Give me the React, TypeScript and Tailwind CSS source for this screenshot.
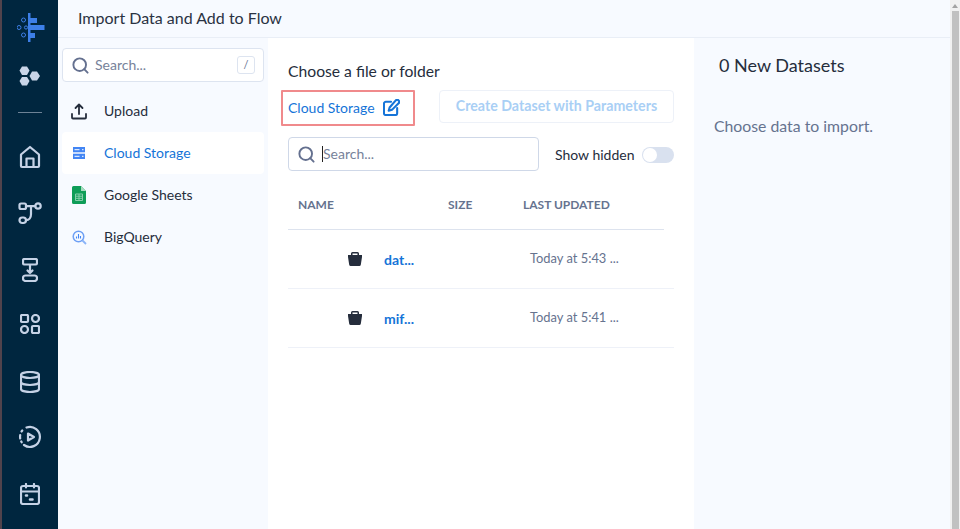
import React from 'react';
import { Search } from 'lucide-react';

const lato = { fontFamily: 'Lato, "Open Sans", sans-serif' };

const Logo = () => (
  <svg width="28" height="30" viewBox="0 0 28 30" fill="none">
    <rect x="11" y="0" width="2.5" height="29" fill="#3d7fe8" />
    <rect x="13" y="5" width="7" height="5" fill="#3d7fe8" />
    <rect x="13" y="12" width="14.5" height="5" fill="#3d7fe8" />
    <rect x="13" y="20" width="5" height="5" fill="#3d7fe8" />
    <circle cx="6.5" cy="7" r="2" stroke="#3d7fe8" strokeWidth="1" />
    <circle cx="2" cy="14.5" r="2" stroke="#3d7fe8" strokeWidth="1" />
    <circle cx="9" cy="14.5" r="1.6" stroke="#3d7fe8" strokeWidth="1" />
    <circle cx="6.5" cy="22" r="2" stroke="#3d7fe8" strokeWidth="1" />
  </svg>
);

const Hexes = () => (
  <svg width="22" height="20" viewBox="0 0 22 20" fill="#c9d5e8">
    <polygon points="3,0.5 8,0.5 10.5,4.5 8,9 3,9 0.5,4.5" />
    <polygon points="13,5.5 18,5.5 21,10 18,14.5 13,14.5 10.5,10" />
    <polygon points="3,11 8,11 10.5,15 8,19.5 3,19.5 0.5,15" />
  </svg>
);

const stroke = { fill: 'none', stroke: '#c5d2e6', strokeWidth: 2.2, strokeLinecap: 'round', strokeLinejoin: 'round' } as const;

const Home = () => (
  <svg width="22" height="24" viewBox="0 0 22 24" {...stroke}>
    <path d="M2 21V9.500L11 2l9 7.500V21a1 1 0 0 1-1 1H3a1 1 0 0 1-1-1z" />
    <path d="M7.500 22v-8.500h7V22" />
  </svg>
);

const FlowIcon = () => (
  <svg width="24" height="24" viewBox="0 0 24 24" {...stroke}>
    <rect x="1.500" y="2.500" width="6.500" height="5.500" rx="1.500" />
    <rect x="1.500" y="16.500" width="6.500" height="5.500" rx="2.700" />
    <circle cx="20" cy="5" r="2.700" />
    <path d="M8 5.200h9.300M13 5.200v8c0 3.500-2 6-5 6" />
  </svg>
);

const ImportIcon = () => (
  <svg width="16" height="24" viewBox="0 0 16 24" {...stroke}>
    <rect x="1" y="1" width="14" height="5.500" rx="1.500" />
    <rect x="1" y="17.500" width="14" height="5.500" rx="2.500" />
    <path d="M8 7v8M5.500 12.500 8 15l2.500-2.500" />
  </svg>
);

const GridIcon = () => (
  <svg width="20" height="20" viewBox="0 0 20 20" {...stroke}>
    <rect x="1" y="1" width="7" height="7" rx="1" />
    <circle cx="15.500" cy="4.500" r="3.500" />
    <circle cx="4.500" cy="15.500" r="3.500" />
    <rect x="12" y="12" width="7" height="7" rx="1" />
  </svg>
);

const DbIcon = () => (
  <svg width="20" height="22" viewBox="0 0 20 22" {...stroke}>
    <ellipse cx="10" cy="4" rx="9" ry="3" />
    <path d="M1 4v14c0 1.700 4 3 9 3s9-1.300 9-3V4" />
    <path d="M1 11c0 1.700 4 3 9 3s9-1.300 9-3" />
  </svg>
);

const PlayIcon = () => (
  <svg width="24" height="24" viewBox="0 0 24 24" {...stroke}>
    <path d="M8.500 2.500A10 10 0 1 1 6 20" />
    <path d="M2.200 13.500a10 10 0 0 1 0-3.500M3.700 17.300l-.5-.9M3.500 6.500l.8-1" />
    <path d="M10 8.500 16 12l-6 3.500z" />
  </svg>
);

const CalendarIcon = () => (
  <svg width="20" height="22" viewBox="0 0 20 22" {...stroke}>
    <rect x="1" y="3" width="18" height="18" rx="2" />
    <path d="M1 8.500h18M6 1v3.500M14 1v3.500" />
    <path d="M6 12.500h1M10 16.500h2.500" strokeWidth="2.600" />
  </svg>
);

const UploadIcon = () => (
  <svg width="16" height="17" viewBox="0 0 16 17" fill="none" stroke="#252d3c" strokeWidth="1.800" strokeLinecap="round" strokeLinejoin="round">
    <path d="M8 11V1.500M4.500 5 8 1.500 11.500 5" />
    <path d="M1 11v3.500a1 1 0 0 0 1 1h12a1 1 0 0 0 1-1V11" />
  </svg>
);

const StorageIcon = () => (
  <svg width="12" height="12" viewBox="0 0 12 12">
    <rect width="12" height="5.300" fill="#4285f4" />
    <rect y="6.700" width="12" height="5.300" fill="#4285f4" />
    <path d="M1.500 2.700h5M9 2.700h1.500M1.500 9.300h5M9 9.300h1.500" stroke="#fff" strokeWidth="1" />
  </svg>
);

const SheetsIcon = () => (
  <svg width="14" height="18" viewBox="0 0 14 18">
    <path d="M1.500 0H9l5 5v11.500a1.500 1.500 0 0 1-1.500 1.500h-11A1.500 1.500 0 0 1 0 16.500v-15A1.500 1.500 0 0 1 1.500 0z" fill="#0f9d58" />
    <path d="M9 0l5 5H9z" fill="#a8dcc0" />
    <path d="M3.500 8h7v6.500h-7zM3.500 10.200h7M3.500 12.300h7M7 8v6.500" fill="none" stroke="#87ceab" strokeWidth="1" />
  </svg>
);

const BigQueryIcon = () => (
  <svg width="15" height="15" viewBox="0 0 15 15" fill="none">
    <circle cx="6.500" cy="6.500" r="5.300" stroke="#6ea0f5" strokeWidth="1.500" />
    <path d="M6.500 4v4.500M4.500 6.500v2M8.500 6v2.500" stroke="#4285f4" strokeWidth="1.100" />
    <path d="M10.500 10.500l3.500 3.500" stroke="#8ab4f8" strokeWidth="1.800" />
  </svg>
);

const EditIcon = () => (
  <svg width="17" height="17" viewBox="0 0 18 18" fill="none" stroke="#1574d8" strokeWidth="2.200" strokeLinecap="round" strokeLinejoin="round">
    <path d="M8.500 3H3a2 2 0 0 0-2 2v10a2 2 0 0 0 2 2h10a2 2 0 0 0 2-2V9.500" />
    <path d="M13.500 1.500a1.800 1.800 0 0 1 3 3L9.500 11.500l-3.500 1 1-3.500z" />
  </svg>
);

const Bucket = () => (
  <svg width="14" height="14" viewBox="0 0 14 14">
    <path fillRule="evenodd" d="M4.500 0h5A1.500 1.500 0 0 1 11 1.500V3h3v2l-1.200 7.800A1.500 1.500 0 0 1 11.300 14H2.700a1.500 1.500 0 0 1-1.500-1.200L0 5V3h3V1.500A1.500 1.500 0 0 1 4.500 0zM4.500 1.500V3h5V1.500z" fill="#252d3c" />
  </svg>
);

const navIcons = [
  { node: <Home />, h: 'h-[24px]', mt: 'mt-[32px]' },
  { node: <FlowIcon />, h: 'h-[24px]', mt: 'mt-[32px]' },
  { node: <ImportIcon />, h: 'h-[24px]', mt: 'mt-[33px]' },
  { node: <GridIcon />, h: 'h-[20px]', mt: 'mt-[32px]' },
  { node: <DbIcon />, h: 'h-[22px]', mt: 'mt-[37px]' },
  { node: <PlayIcon />, h: 'h-[24px]', mt: 'mt-[32px]' },
  { node: <CalendarIcon />, h: 'h-[22px]', mt: 'mt-[34px]' },
];

const sources = [
  { label: 'Upload', icon: <UploadIcon /> },
  { label: 'Cloud Storage', icon: <StorageIcon />, active: true },
  { label: 'Google Sheets', icon: <SheetsIcon /> },
  { label: 'BigQuery', icon: <BigQueryIcon /> },
];

const files = [
  { name: 'dat...', updated: 'Today at 5:43 ...' },
  { name: 'mif...', updated: 'Today at 5:41 ...' },
];

export default function App() {
  return (
    <div style={lato} className="flex h-[529px] w-[960px] overflow-hidden bg-white text-[14px] text-[#252d3c]">
      <div className="w-[2px] shrink-0 bg-[#51434c]" />

      {/* main nav */}
      <nav className="flex w-[56px] shrink-0 flex-col items-center bg-[#00263f] pt-[13px]">
        <div className="ml-[1px] h-[30px]"><Logo /></div>
        <div className="mt-[23px] h-[20px]"><Hexes /></div>
        <div className="mt-[26px] h-px w-[24px] bg-[#6d8296]" />
        {navIcons.map((item, i) => (
          <div key={i} className={`${item.mt} ${item.h} flex items-center justify-center`}>{item.node}</div>
        ))}
      </nav>

      <div className="flex min-w-0 flex-1 flex-col">
        <header className="flex h-[38px] shrink-0 items-center border-b border-[#e9eef6] bg-[#f7faff] pb-[2px] pl-[20px] text-[16px] leading-none text-[#2a3242]">
          Import Data and Add to Flow
        </header>

        <div className="flex min-h-0 flex-1">
          {/* sources */}
          <aside className="w-[210px] shrink-0 bg-[#f7faff] px-[4px] pt-[10px]">
            <div className="flex h-[34px] items-center rounded-[4px] border border-[#dde4f0] bg-white pl-[8px] pr-[8px]">
              <Search size={19} strokeWidth={2.4} className="text-[#64708f]" />
              <span className="ml-[5px] flex-1 pb-[2px] text-[14px] text-[#77829a]">Search...</span>
              <span className="flex h-[18px] w-[18px] items-center justify-center rounded-[3px] border border-[#dde4f0] text-[11px] text-[#64708f]">/</span>
            </div>
            <div className="mt-[8px]">
              {sources.map(s => (
                <div key={s.label} className={`flex h-[42px] items-center rounded-[4px] ${s.active ? 'bg-white text-[#1574d8]' : ''}`}>
                  <span className="flex w-[34px] justify-center">{s.icon}</span>
                  <span className="ml-[8px] pb-[2px]">{s.label}</span>
                </div>
              ))}
            </div>
          </aside>

          {/* browser */}
          <main className="w-[426px] shrink-0 bg-white pl-[20px] pr-[20px]">
            <div className="mt-[23px] text-[15.7px] leading-[20px]">Choose a file or folder</div>
            <div className="mt-[9px] flex items-start">
              <div className="-ml-[7px] mb-[1px] flex h-[36px] w-[134px] items-center rounded-[1px] border-2 border-[#f08a8c] pl-[5px] text-[#1574d8]">
                <span className="pb-[2px]">Cloud Storage</span>
                <span className="mb-[2px] ml-[8px] flex"><EditIcon /></span>
              </div>
              <button className="ml-[24px] h-[33px] w-[235px] rounded-[4px] border border-[#edf1f8] pb-[2px] text-center text-[14.2px] font-bold text-[#a9cff5]">
                Create Dataset with Parameters
              </button>
            </div>
            <div className="mt-[10px] flex items-center">
              <div className="flex h-[34px] w-[251px] items-center rounded-[4px] border border-[#cfd8e8] pl-[8px]">
                <Search size={19} strokeWidth={2.4} className="text-[#64708f]" />
                <span className="ml-[6px] h-[16px] w-px bg-[#222]" />
                <span className="pb-[2px] text-[14px] text-[#77829a]">Search...</span>
              </div>
              <span className="ml-[16px] mt-[1px] whitespace-nowrap">Show hidden</span>
              <span className="ml-auto mt-[1px] flex h-[16px] w-[32px] items-center rounded-full bg-[#d9e1ef] pl-[1px]">
                <span className="h-[14px] w-[14px] rounded-full bg-white" />
              </span>
            </div>

            <div className="mt-[24px] grid h-[35px] w-[376px] grid-cols-[150px_75px_1fr] border-b border-[#dde3ee] pl-[10px] text-[12px] font-bold leading-[20px] text-[#66738f]">
              <span>NAME</span>
              <span>SIZE</span>
              <span>LAST UPDATED</span>
            </div>
            {files.map(f => (
              <div key={f.name} className="flex h-[59px] items-center border-b border-[#eef1f8]">
                <span className="ml-[60px] flex w-[36px]"><Bucket /></span>
                <span className="w-[146px] font-bold text-[#1574d8]">{f.name}</span>
                <span className="text-[12.9px] text-[#66738f]">{f.updated}</span>
              </div>
            ))}
          </main>

          {/* summary */}
          <aside className="flex-1 bg-[#f7faff] pl-[20px]">
            <div className="ml-[5px] mt-[16px] text-[18px] leading-[22px] text-[#252d3c]">0 New Datasets</div>
            <div className="mt-[40px] text-[15.8px] leading-[20px] text-[#66738f]">Choose data to import.</div>
          </aside>
        </div>
      </div>

      {/* scrollbar */}
      <div className="flex w-[10px] shrink-0 flex-col items-center bg-[#f1f1f1]">
        <div className="mt-[4px] h-0 w-0 border-x-[3px] border-b-[4px] border-x-transparent border-b-[#a3a3a3]" />
        <div className="mt-[3px] w-[7px] flex-1 bg-[#c1c1c1]" />
      </div>
    </div>
  );
}
